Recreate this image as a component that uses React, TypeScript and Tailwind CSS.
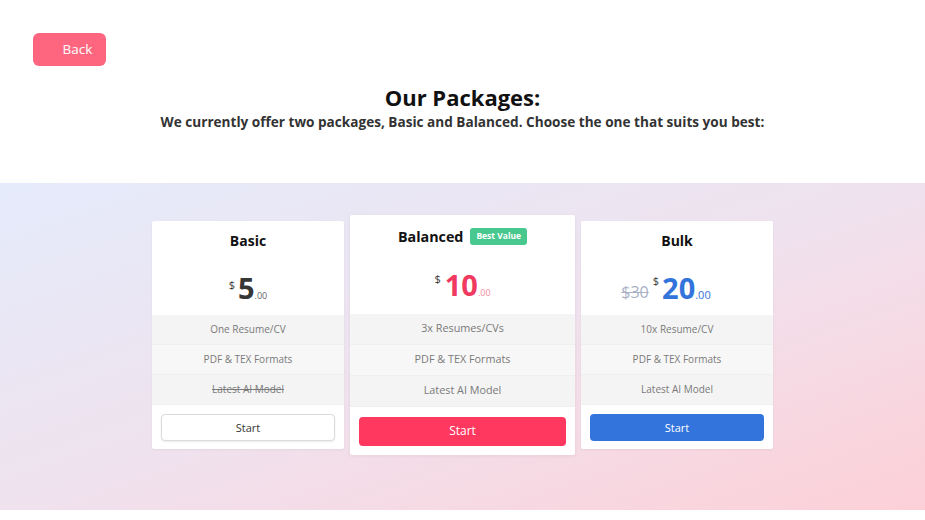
const font = { fontFamily: '"Open Sans", "Noto Sans", sans-serif' }

const Feature = ({ text, off, tall, shade }: { text: string; off?: boolean; tall?: boolean; shade: boolean }) => (
  <div
    className={`flex items-center justify-center text-[#7a7a7a] border-b border-[#efefef] last:border-b-0 ${
      tall ? "h-[31px] text-[10.8px]" : "h-[30px] text-[10px]"
    } ${shade ? "bg-[#f4f4f4]" : "bg-[#f7f7f7]"}`}
  >
    <span className={off ? "line-through" : ""}>{text}</span>
  </div>
)

export default function App() {
  return (
    <div className="w-[925px] h-[520px] bg-white overflow-hidden text-[#363636]" style={font}>
      <div className="h-[183px] flex flex-col">
        <div className="pt-[33px] pl-[33px]">
          <button className="h-[33px] w-[73px] rounded-[6px] bg-[#fe6680] text-white text-[13.5px] pl-[16px] flex items-center justify-center">
            Back
          </button>
        </div>
        <div className="flex flex-col items-center mt-[18px]">
          <h1 className="text-[22px] font-bold leading-[27px] text-[#111]">Our Packages:</h1>
          <p className="text-[13.6px] font-bold leading-[20px] text-[#333] mt-[1px]">
            We currently offer two packages, Basic and Balanced. Choose the one that suits you best:
          </p>
        </div>
      </div>

      <div className="h-[327px] bg-gradient-to-br from-[#e5ebfb] via-[#efe2ee] to-[#fdd0d8] flex items-center justify-center gap-[6px]">
        {/* Basic */}
        <div className="w-[192px] h-[228px] bg-white rounded-[2px] shadow-[0_1px_3px_rgba(0,0,0,0.05)] flex flex-col mt-[-24px]">
          <div className="h-[94px] flex flex-col items-center">
            <div className="mt-[10px] text-[14px] font-bold leading-[20px] text-[#111]">Basic</div>
            <div className="mt-[24px] flex items-end leading-none">
              <span className="text-[11px] self-start mt-[4px] mr-[3px]">$</span>
              <span className="text-[29px] font-bold leading-[26px]">5</span>
              <span className="text-[9px] text-[#666] mb-[1px]">.00</span>
            </div>
          </div>
          <Feature text="One Resume/CV" shade />
          <Feature text="PDF & TEX Formats" shade={false} />
          <Feature text="Latest AI Model" off shade />
          <div className="px-[9px] pt-[9px]">
            <button className="w-full h-[27px] rounded-[4px] border border-[#dbdbdb] bg-white text-[11px] text-[#363636] shadow-[0_1px_2px_rgba(0,0,0,0.08)]">
              Start
            </button>
          </div>
        </div>

        {/* Balanced */}
        <div className="w-[225px] h-[240px] bg-white rounded-[2px] shadow-[0_1px_4px_rgba(0,0,0,0.06)] flex flex-col mt-[-24px]">
          <div className="h-[99px] flex flex-col items-center">
            <div className="mt-[12px] flex items-center gap-[7px]">
              <span className="text-[14.3px] font-bold leading-[20px] text-[#111]">Balanced</span>
              <span className="h-[17px] px-[6px] rounded-[3px] bg-[#48c78e] text-white text-[8.5px] font-bold flex items-center">
                Best Value
              </span>
            </div>
            <div className="mt-[24px] flex items-end leading-none">
              <span className="text-[11px] self-start mt-[2px] mr-[4px] text-[#363636]">$</span>
              <span className="text-[29px] font-bold leading-[27px] text-[#f03a5f]">10</span>
              <span className="text-[9px] text-[#f58ba0] mb-[1px]">.00</span>
            </div>
          </div>
          <Feature text="3x Resumes/CVs" tall shade />
          <Feature text="PDF & TEX Formats" tall shade={false} />
          <Feature text="Latest AI Model" tall shade />
          <div className="px-[9px] pt-[10px]">
            <button className="w-full h-[29px] rounded-[4px] bg-[#ff3860] text-white text-[12px]">Start</button>
          </div>
        </div>

        {/* Bulk */}
        <div className="w-[192px] h-[228px] bg-white rounded-[2px] shadow-[0_1px_3px_rgba(0,0,0,0.05)] flex flex-col mt-[-24px]">
          <div className="h-[94px] flex flex-col items-center">
            <div className="mt-[10px] text-[14px] font-bold leading-[20px] text-[#111]">Bulk</div>
            <div className="mt-[23px] flex items-end leading-none pr-[22px]">
              <span className="text-[16px] text-[#a9b0c6] line-through mb-[1px] mr-[4px]">$30</span>
              <span className="text-[11px] self-start mt-[1px] mr-[3px]">$</span>
              <span className="text-[29px] font-bold leading-[27px] text-[#3273dc]">20</span>
              <span className="text-[11px] text-[#3273dc] mb-[1px]">.00</span>
            </div>
          </div>
          <Feature text="10x Resume/CV" shade />
          <Feature text="PDF & TEX Formats" shade={false} />
          <Feature text="Latest AI Model" shade />
          <div className="px-[9px] pt-[9px]">
            <button className="w-full h-[27px] rounded-[4px] bg-[#3273dc] text-white text-[11px]">Start</button>
          </div>
        </div>
      </div>
    </div>
  )
}
